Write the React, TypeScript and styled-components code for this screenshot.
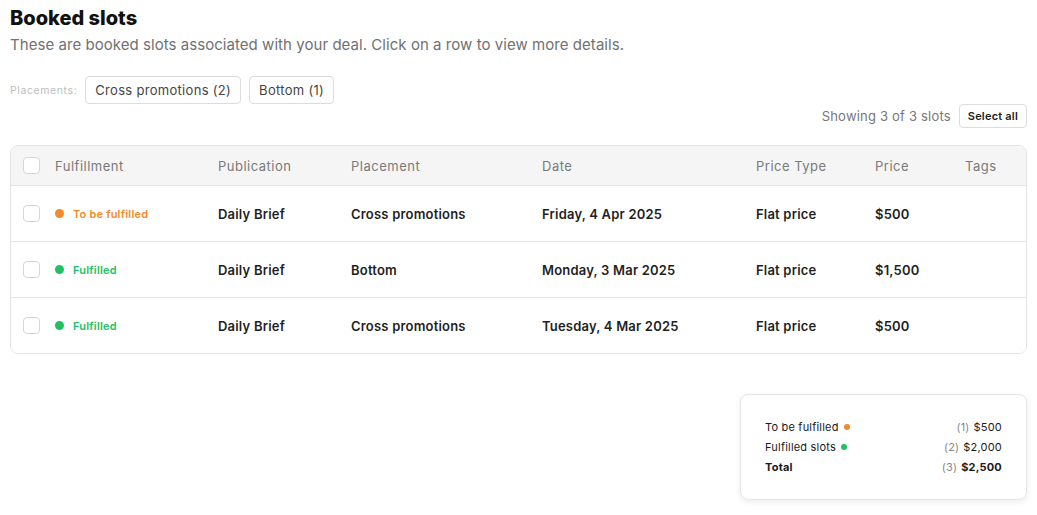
import React from 'react';
import styled, { createGlobalStyle } from 'styled-components';

const GlobalStyle = createGlobalStyle`
  body {
    margin: 0;
    background: #ffffff;
    font-family: 'Inter', 'Noto Sans', sans-serif;
    color: #1f1f1f;
  }
`;

const Page = styled.div`
  padding: 4px 10px 16px;
  display: flex;
  flex-direction: column;
`;

const Title = styled.h1`
  margin: 0;
  font-size: 20px;
  font-weight: 800;
  line-height: 28px;
  color: #111;
`;

const Subtitle = styled.p`
  margin: 2px 0 0;
  font-size: 15px;
  letter-spacing: 0.05px;
  line-height: 22px;
  color: #717171;
`;

const FilterRow = styled.div`
  display: flex;
  align-items: center;
  gap: 8px;
  margin-top: 20px;
`;

const FilterLabel = styled.span`
  font-size: 10.5px;
  letter-spacing: 0.6px;
  color: #bdbdbd;
`;

const Chip = styled.button`
  font-family: inherit;
  font-size: 13px;
  letter-spacing: 0.3px;
  color: #444;
  background: #fff;
  border: 1px solid #dcdcdc;
  border-radius: 4px;
  height: 28px;
  padding: 0 9px;
`;

const Toolbar = styled.div`
  display: flex;
  justify-content: flex-end;
  align-items: center;
  gap: 8px;
`;

const Count = styled.span`
  font-size: 13px;
  letter-spacing: 0.2px;
  color: #777;
`;

const SmallButton = styled.button`
  font-family: inherit;
  font-size: 11px;
  font-weight: 600;
  letter-spacing: 0.2px;
  color: #222;
  background: #fff;
  border: 1px solid #dcdcdc;
  border-radius: 4px;
  height: 24px;
  padding: 0 8px;
`;

const Table = styled.div`
  margin-top: 17px;
  border: 1px solid #e4e4e4;
  border-radius: 8px;
  overflow: hidden;
`;

const cols = '44px 163px 133px 191px 214px 119px 90px 1fr';

const HeadRow = styled.div`
  display: grid;
  grid-template-columns: ${cols};
  align-items: center;
  height: 39px;
  background: #f5f5f5;
`;

const Row = styled.div`
  display: grid;
  grid-template-columns: ${cols};
  align-items: center;
  height: 55px;
  border-top: 1px solid #e4e4e4;
  background: #fff;
`;

const HeadCell = styled.div`
  font-size: 13px;
  letter-spacing: 0.5px;
  color: #7a7a7a;
`;

const Cell = styled.div`
  font-size: 13px;
  font-weight: 600;
  letter-spacing: 0.2px;
  color: #1f1f1f;
`;

const CheckCell = styled.div`
  padding-left: 12px;
  display: flex;
  align-items: center;
`;

const Checkbox = styled.span`
  width: 15px;
  height: 15px;
  border: 1px solid #d6d6d6;
  border-radius: 4px;
  background: #fff;
`;

const Status = styled.div<{ $color: string }>`
  display: flex;
  align-items: center;
  gap: 9px;
  font-size: 11px;
  font-weight: 600;
  letter-spacing: 0.2px;
  color: ${(p) => p.$color};
`;

const Dot = styled.span<{ $color: string; $size?: number }>`
  width: ${(p) => p.$size ?? 9}px;
  height: ${(p) => p.$size ?? 9}px;
  border-radius: 50%;
  background: ${(p) => p.$color};
  display: inline-block;
`;

const SummaryWrap = styled.div`
  display: flex;
  justify-content: flex-end;
  margin-top: 40px;
`;

const Summary = styled.div`
  width: 237px;
  padding: 24px;
  border: 1px solid #e6e6e6;
  border-radius: 8px;
  box-shadow: 0 2px 6px rgba(0, 0, 0, 0.08);
  display: flex;
  flex-direction: column;
  gap: 4px;
`;

const SumRow = styled.div<{ $bold?: boolean }>`
  display: flex;
  justify-content: space-between;
  align-items: center;
  font-size: 11px;
  line-height: 16px;
  letter-spacing: 0.2px;
  font-weight: ${(p) => (p.$bold ? 700 : 400)};
  color: #1a1a1a;
`;

const SumLabel = styled.span`
  display: flex;
  align-items: center;
  gap: 5px;
`;

const Qty = styled.span`
  color: #888;
  font-weight: 400;
  margin-right: 4px;
`;

const ORANGE = '#f58a2c';
const GREEN = '#22c065';

const rows = [
  { status: 'To be fulfilled', color: ORANGE, pub: 'Daily Brief', placement: 'Cross promotions', date: 'Friday, 4 Apr 2025', type: 'Flat price', price: '$500' },
  { status: 'Fulfilled', color: GREEN, pub: 'Daily Brief', placement: 'Bottom', date: 'Monday, 3 Mar 2025', type: 'Flat price', price: '$1,500' },
  { status: 'Fulfilled', color: GREEN, pub: 'Daily Brief', placement: 'Cross promotions', date: 'Tuesday, 4 Mar 2025', type: 'Flat price', price: '$500' },
];

const App: React.FC = () => {
  return (
    <Page>
      <GlobalStyle />
      <Title>Booked slots</Title>
      <Subtitle>These are booked slots associated with your deal. Click on a row to view more details.</Subtitle>

      <FilterRow>
        <FilterLabel>Placements:</FilterLabel>
        <Chip>Cross promotions (2)</Chip>
        <Chip>Bottom (1)</Chip>
      </FilterRow>

      <Toolbar>
        <Count>Showing 3 of 3 slots</Count>
        <SmallButton>Select all</SmallButton>
      </Toolbar>

      <Table>
        <HeadRow>
          <CheckCell><Checkbox /></CheckCell>
          <HeadCell>Fulfillment</HeadCell>
          <HeadCell>Publication</HeadCell>
          <HeadCell>Placement</HeadCell>
          <HeadCell>Date</HeadCell>
          <HeadCell>Price Type</HeadCell>
          <HeadCell>Price</HeadCell>
          <HeadCell>Tags</HeadCell>
        </HeadRow>
        {rows.map((r, i) => (
          <Row key={i}>
            <CheckCell><Checkbox /></CheckCell>
            <Status $color={r.color}>
              <Dot $color={r.color} />
              {r.status}
            </Status>
            <Cell>{r.pub}</Cell>
            <Cell>{r.placement}</Cell>
            <Cell>{r.date}</Cell>
            <Cell>{r.type}</Cell>
            <Cell>{r.price}</Cell>
            <Cell />
          </Row>
        ))}
      </Table>

      <SummaryWrap>
        <Summary>
          <SumRow>
            <SumLabel>To be fulfilled <Dot $color={ORANGE} $size={6} /></SumLabel>
            <span><Qty>(1)</Qty>$500</span>
          </SumRow>
          <SumRow>
            <SumLabel>Fulfilled slots <Dot $color={GREEN} $size={6} /></SumLabel>
            <span><Qty>(2)</Qty>$2,000</span>
          </SumRow>
          <SumRow $bold>
            <SumLabel>Total</SumLabel>
            <span><Qty>(3)</Qty>$2,500</span>
          </SumRow>
        </Summary>
      </SummaryWrap>
    </Page>
  );
};

export default App;
